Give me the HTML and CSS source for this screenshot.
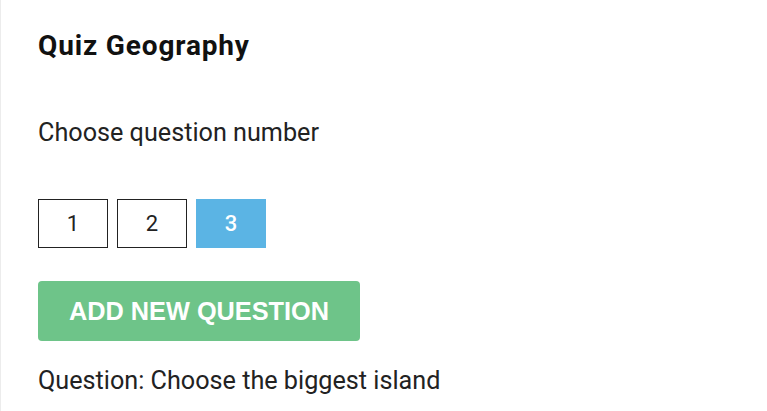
FILE: index.html
```html
<!DOCTYPE html>
<html>
<head>
<meta charset="utf-8">
<link rel="stylesheet" href="styles.css">
</head>
<body>
<div class="card">
  <h1 class="title">Quiz Geography</h1>
  <p class="label">Choose question number</p>
  <div class="numbers">
    <button class="num">1</button>
    <button class="num">2</button>
    <button class="num active">3</button>
  </div>
  <button class="add">ADD NEW QUESTION</button>
  <p class="question">Question: Choose the biggest island</p>
</div>
</body>
</html>
```
FILE: styles.css
```css
html, body {
  margin: 0;
  padding: 0;
  background: #fff;
}
body {
  font-family: Roboto, "Noto Sans", sans-serif;
}
.card {
  border-left: 1px solid #ececec;
  min-height: 411px;
  box-sizing: border-box;
  padding: 31px 37px 0;
}
.title {
  margin: 0;
  font-size: 28px;
  letter-spacing: 0.85px;
  font-weight: 700;
  color: #111;
  line-height: 30px;
}
.label {
  margin: 57px 0 0;
  font-size: 25.2px;
  color: #222;
  line-height: 30px;
}
.numbers {
  display: flex;
  gap: 9px;
  margin-top: 51px;
}
.num {
  width: 70px;
  height: 49px;
  border: 1px solid #222;
  background: #fff;
  font-family: Roboto, sans-serif;
  font-size: 22px;
  color: #222;
  padding: 0;
  box-sizing: border-box;
}
.num.active {
  background: #5bb4e4;
  border-color: #5bb4e4;
  color: #fff;
  font-weight: 500;
}
.add {
  display: block;
  margin-top: 33px;
  width: 322px;
  height: 60px;
  border: none;
  border-radius: 4px;
  background: #6ec489;
  color: #fff;
  font-family: "Liberation Sans", Arial, sans-serif;
  font-weight: 700;
  font-size: 25.3px;
  padding: 0;
}
.question {
  margin: 25px 0 0;
  font-size: 25.2px;
  color: #222;
  line-height: 30px;
}
```
